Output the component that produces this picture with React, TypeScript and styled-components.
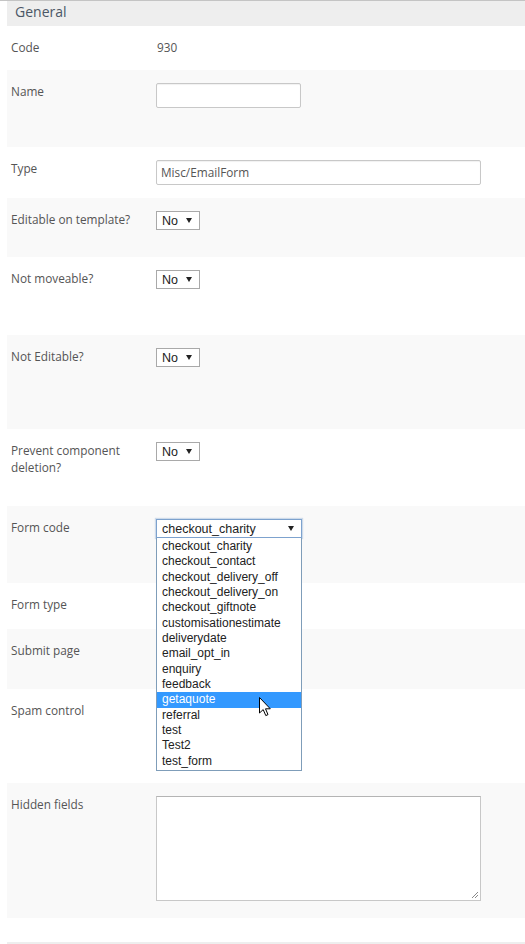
import styled, { createGlobalStyle } from 'styled-components'

const GlobalStyle = createGlobalStyle`
  html, body {
    margin: 0;
    padding: 0;
    background: #ffffff;
  }
  body {
    font-family: "Open Sans", "Liberation Sans", Arial, sans-serif;
    color: #555555;
  }
`

const Page = styled.div`
  width: 525px;
  border-top: 1px solid #c4c4c4;
  padding-left: 7px;
  box-sizing: border-box;
`

const SectionHeader = styled.div`
  height: 25px;
  background: #eeeeee;
  padding-left: 8px;
  font-size: 14px;
  line-height: 21px;
  color: #4b5766;
`

const Row = styled.div<{ $h: number; $shade: boolean }>`
  display: grid;
  grid-template-columns: 145px 1fr;
  align-items: start;
  height: ${(p) => p.$h}px;
  box-sizing: border-box;
  padding: 13px 0 0 4px;
  background: ${(p) => (p.$shade ? '#f9f9f9' : '#ffffff')};
`

const Label = styled.div`
  font-size: 11.8px;
  line-height: 17px;
  color: #555555;
  padding-right: 12px;
`

const Value = styled.div`
  font-size: 11.8px;
  line-height: 17px;
  color: #555555;
  padding-left: 1px;
`

const TextInput = styled.div<{ $w: number }>`
  width: ${(p) => p.$w}px;
  height: 25px;
  box-sizing: border-box;
  border: 1px solid #c8c8c8;
  border-radius: 2px;
  background: #ffffff;
  box-shadow: inset 0 1px 1px rgba(0, 0, 0, 0.06);
  padding: 0 4px;
  font-size: 11.8px;
  line-height: 23px;
  color: #555555;
`

const TextArea = styled.div`
  position: relative;
  width: 325px;
  height: 105px;
  box-sizing: border-box;
  border: 1px solid #c8c8c8;
  border-top-color: #b4b4b4;
  background: #ffffff;
`

const Grip = styled.svg`
  position: absolute;
  right: 1px;
  bottom: 1px;
`

const SelectWrap = styled.div`
  position: relative;
`

const SelectBox = styled.div<{ $w: number; $focus?: boolean }>`
  display: flex;
  align-items: center;
  justify-content: space-between;
  width: ${(p) => p.$w}px;
  height: 19px;
  box-sizing: border-box;
  border: 1px solid ${(p) => (p.$focus ? '#7da2ce' : '#a9a9a9')};
  box-shadow: ${(p) => (p.$focus ? '0 0 1px 1px rgba(125, 162, 206, 0.35)' : 'none')};
  background: #ffffff;
  padding: 0 7px 0 5px;
  font-family: "Liberation Sans", Arial, sans-serif;
  font-size: 12.5px;
  color: #222222;
`

const Arrow = styled.span`
  width: 0;
  height: 0;
  border-left: 3px solid transparent;
  border-right: 3px solid transparent;
  border-top: 5px solid #222222;
`

const ListBox = styled.div`
  position: absolute;
  top: 19px;
  left: 0;
  z-index: 10;
  width: 146px;
  box-sizing: border-box;
  border: 1px solid #7f9db9;
  border-top: none;
  background: #ffffff;
  padding: 1px 0 1px;
`

const Option = styled.div<{ $active?: boolean }>`
  height: 15.35px;
  line-height: 15px;
  padding-left: 5px;
  font-family: "Liberation Sans", Arial, sans-serif;
  font-size: 12px;
  white-space: nowrap;
  color: ${(p) => (p.$active ? '#ffffff' : '#222222')};
  background: ${(p) => (p.$active ? '#3399ff' : 'transparent')};
`

const Cursor = styled.svg`
  position: absolute;
  left: 103px;
  top: 178px;
  z-index: 11;
`

const formCodes = [
  'checkout_charity',
  'checkout_contact',
  'checkout_delivery_off',
  'checkout_delivery_on',
  'checkout_giftnote',
  'customisationestimate',
  'deliverydate',
  'email_opt_in',
  'enquiry',
  'feedback',
  'getaquote',
  'referral',
  'test',
  'Test2',
  'test_form',
]

const YesNo = () => (
  <SelectBox $w={44}>
    <span>No</span>
    <Arrow />
  </SelectBox>
)

const FormCodeSelect = () => (
  <SelectWrap>
    <SelectBox $w={146} $focus>
      <span>checkout_charity</span>
      <Arrow />
    </SelectBox>
    <ListBox>
      {formCodes.map((c) => (
        <Option key={c} $active={c === 'getaquote'}>
          {c}
        </Option>
      ))}
    </ListBox>
    <Cursor width="13" height="20" viewBox="0 0 13 20">
      <path
        d="M0.5 0.5 L0.5 16 L4.2 12.6 L6.8 18.6 L9 17.6 L6.5 11.8 L11.3 11.8 Z"
        fill="#ffffff"
        stroke="#000000"
        strokeWidth="1"
        strokeLinejoin="round"
      />
    </Cursor>
  </SelectWrap>
)

type Field = { label: string; h: number; control?: React.ReactNode }

const fields: Field[] = [
  { label: 'Code', h: 44, control: <Value>930</Value> },
  { label: 'Name', h: 77, control: <TextInput $w={145} /> },
  { label: 'Type', h: 51, control: <TextInput $w={325}>Misc/EmailForm</TextInput> },
  { label: 'Editable on template?', h: 59, control: <YesNo /> },
  { label: 'Not moveable?', h: 78, control: <YesNo /> },
  { label: 'Not Editable?', h: 94, control: <YesNo /> },
  { label: 'Prevent component deletion?', h: 77, control: <YesNo /> },
  { label: 'Form code', h: 77, control: <FormCodeSelect /> },
  { label: 'Form type', h: 46 },
  { label: 'Submit page', h: 60 },
  { label: 'Spam control', h: 94 },
  {
    label: 'Hidden fields',
    h: 135,
    control: (
      <TextArea>
        <Grip width="8" height="8" viewBox="0 0 8 8">
          <path d="M7 1 L1 7 M7 4 L4 7" stroke="#8a8a8a" strokeWidth="1" />
        </Grip>
      </TextArea>
    ),
  },
  { label: '', h: 24 },
]

export default function App() {
  return (
    <>
      <GlobalStyle />
      <Page>
        <SectionHeader>General</SectionHeader>
        {fields.map((f, i) => (
          <Row key={i} $h={f.h} $shade={i % 2 === 1}>
            <Label>{f.label}</Label>
            <div>{f.control}</div>
          </Row>
        ))}
        <SectionHeader />
      </Page>
    </>
  )
}
